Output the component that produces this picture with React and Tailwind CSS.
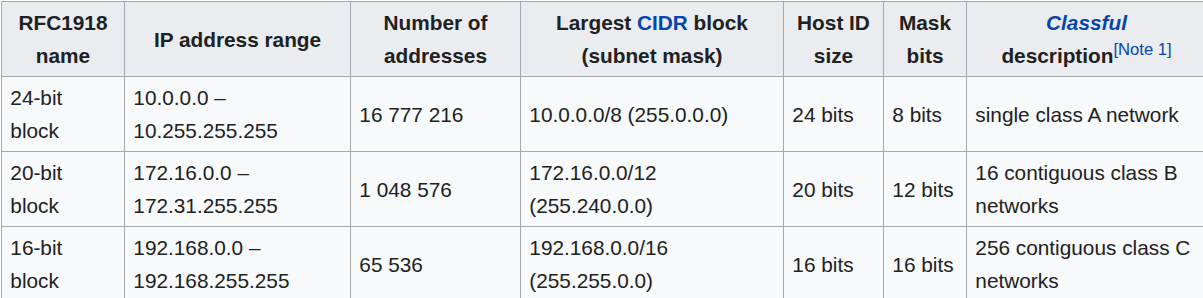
import React from 'react'

// RFC1918 private address blocks (Wikipedia-style wikitable)
const rows = [
  { name: '24-bit block', range: ['10.0.0.0 –', '10.255.255.255'], count: '16\u00a0777\u00a0216', cidr: '10.0.0.0/8 (255.0.0.0)', host: '24 bits', mask: '8 bits', desc: 'single class A network' },
  { name: '20-bit block', range: ['172.16.0.0 –', '172.31.255.255'], count: '1\u00a0048\u00a0576', cidr: '172.16.0.0/12 (255.240.0.0)', host: '20 bits', mask: '12 bits', desc: '16 contiguous class B networks' },
  { name: '16-bit block', range: ['192.168.0.0 –', '192.168.255.255'], count: '65\u00a0536', cidr: '192.168.0.0/16 (255.255.0.0)', host: '16 bits', mask: '16 bits', desc: '256 contiguous class C networks' },
];

const th = "border border-[#a2a9b1] bg-[#eaecf0] px-[8.32px] py-[4px] text-center font-bold";
const td = "border border-[#a2a9b1] px-[8.32px] py-[4px] align-middle";

function App() {
  return (
    <div className="w-[1203px] h-[298px] overflow-hidden bg-white pl-[1px] pt-[1px]">
      <table className="table-fixed border-collapse w-[1205px] text-[20.8px] leading-[33px] text-[#202122] font-['Liberation_Sans',Arial,sans-serif]">
        <thead>
          <tr>
            <th className={`${th} w-[123px]`}>RFC1918 name</th>
            <th className={`${th} w-[226px]`}>IP address range</th>
            <th className={`${th} w-[170px]`}>Number of addresses</th>
            <th className={`${th} w-[263px]`}>
              Largest <span className="text-[#0645ad]">CIDR</span> block (subnet mask)
            </th>
            <th className={`${th} w-[100px]`}>Host ID size</th>
            <th className={`${th} w-[83px]`}>Mask bits</th>
            <th className={`${th} w-[240px]`}>
              <i className="text-[#0645ad]">Classful</i>
              <br />
              description
              <sup className="relative -top-[8px] align-baseline text-[16.6px] font-normal text-[#0645ad]">[Note 1]</sup>
            </th>
          </tr>
        </thead>
        <tbody className="bg-[#f8f9fa]">
          {rows.map((r) => (
            <tr key={r.name}>
              <td className={td}>{r.name}</td>
              <td className={td}>{r.range[0]}<br />{r.range[1]}</td>
              <td className={td}>{r.count}</td>
              <td className={td}>{r.cidr}</td>
              <td className={td}>{r.host}</td>
              <td className={td}>{r.mask}</td>
              <td className={td}>{r.desc}</td>
            </tr>
          ))}
        </tbody>
      </table>
    </div>
  );
}

export default App;
